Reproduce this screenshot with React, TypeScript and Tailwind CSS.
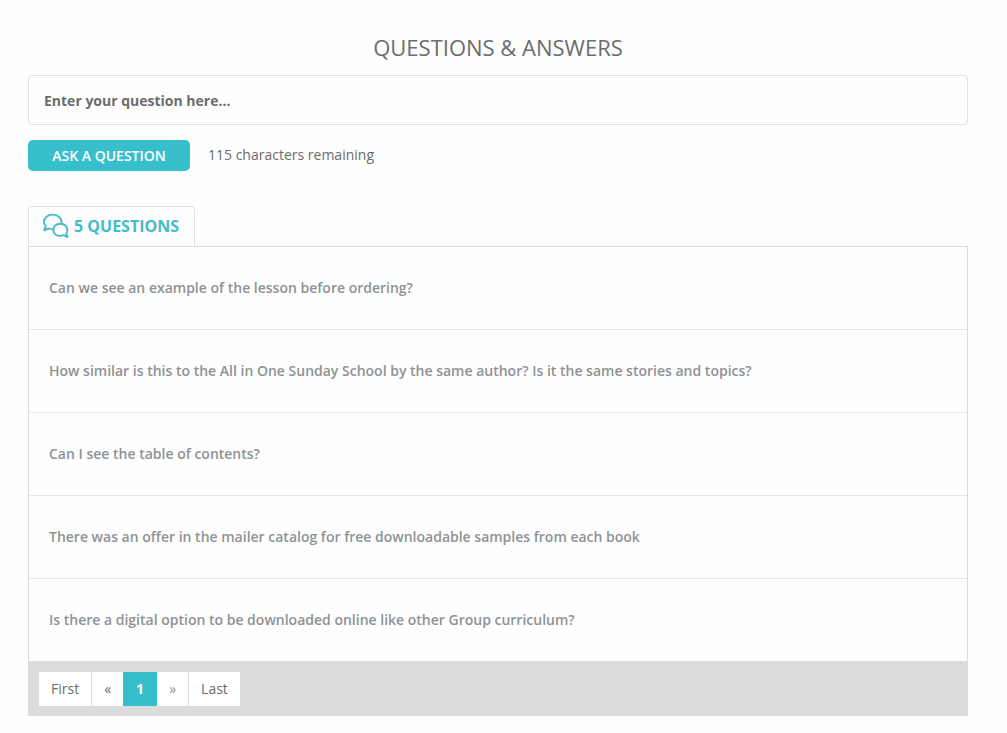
import { useState } from "react";

const MAX_LENGTH = 115;

const QUESTIONS = [
  "Can we see an example of the lesson before ordering?",
  "How similar is this to the All in One Sunday School by the same author? Is it the same stories and topics?",
  "Can I see the table of contents?",
  "There was an offer in the mailer catalog for free downloadable samples from each book",
  "Is there a digital option to be downloaded online like other Group curriculum?",
];

function ChatIcon() {
  return (
    <svg viewBox="0 0 26 26" className="w-[26px] h-[26px] shrink-0" fill="none" stroke="currentColor" strokeWidth="1.9" strokeLinejoin="round" strokeLinecap="round" aria-hidden="true">
      <path d="M9.300 16.200c-1.300 0-2.500-.2-3.600-.7L1.200 17.300l1.500-4.200C1.600 11.900 1 10.400 1 8.800 1 4.700 4.800 1.600 9.700 1.600c4.900 0 8.700 3 8.900 7.800" />
      <path d="M17.300 10.700c-4 0-7 2.600-7 6.100s3 6.100 7 6.100c1.200 0 2.300-.3 3.300-.7l4 1.900-1.400-3.600c.8-1 1.200-2.300 1.200-3.700 0-3.500-3.100-6.100-7.100-6.100z" />
    </svg>
  );
}

export default function App() {
  const [question, setQuestion] = useState("");

  return (
    <main className="min-h-screen pl-7 pr-[39px] pt-8 pb-4 bg-[#fefefe] text-[#6a6d6d] font-['Open_Sans',sans-serif]">
      <h1 className="text-[22px] leading-[30px] text-center">QUESTIONS &amp; ANSWERS</h1>

      {/* Ask form */}
      <form onSubmit={(e) => e.preventDefault()} className="mt-[13px]">
        <input
          type="text"
          aria-label="Your question"
          placeholder="Enter your question here..."
          maxLength={MAX_LENGTH}
          value={question}
          onChange={(e) => setQuestion(e.target.value)}
          className="block w-full h-[50px] px-[15px] text-sm font-bold border border-[#e2e2e2] rounded bg-[#fefefe] placeholder:text-[#6a6d6d] placeholder:opacity-100 focus:outline-none focus:border-[#37c0cb]"
        />
        <div className="flex items-start mt-[15px] gap-[18px]">
          <button type="submit" className="w-[162px] h-[31px] rounded-[5px] bg-[#37c0cb] text-white text-sm font-semibold">
            ASK A QUESTION
          </button>
          <span className="text-sm leading-[30px]">{MAX_LENGTH - question.length} characters remaining</span>
        </div>
      </form>

      {/* Tab */}
      <div className="flex mt-[35px]">
        <h2 className="flex items-center gap-[5px] h-10 pl-[14px] pr-[15px] pb-[2px] border border-b-0 border-[#e2e2e2] rounded-t-[3px] text-[#45bcc6] text-base font-bold">
          <ChatIcon />
          {QUESTIONS.length} QUESTIONS
        </h2>
      </div>

      <section className="border border-[#dcdcdc]">
        <ul className="divide-y divide-[#e5e5e5]">
          {QUESTIONS.map((text) => (
            <li key={text} className="px-5 py-[31px] text-sm font-semibold text-[#8f9294]">
              {text}
            </li>
          ))}
        </ul>

        {/* Pagination */}
        <nav aria-label="Pagination" className="bg-[#dcdcdc] px-[10px] pt-[11px] pb-[9px]">
          <ul className="flex text-sm leading-[34px]">
            <li><a href="#first" className="block px-3 mr-px bg-white">First</a></li>
            <li><a href="#prev" aria-label="Previous page" className="block px-3 bg-white">«</a></li>
            <li><a href="#page-1" aria-current="page" className="block px-[13px] bg-[#37c0cb] text-white font-bold">1</a></li>
            <li><a href="#next" aria-label="Next page" className="block px-3 mr-px bg-white text-[#8f9294]">»</a></li>
            <li><a href="#last" className="block px-3 bg-white">Last</a></li>
          </ul>
        </nav>
      </section>
    </main>
  );
}
